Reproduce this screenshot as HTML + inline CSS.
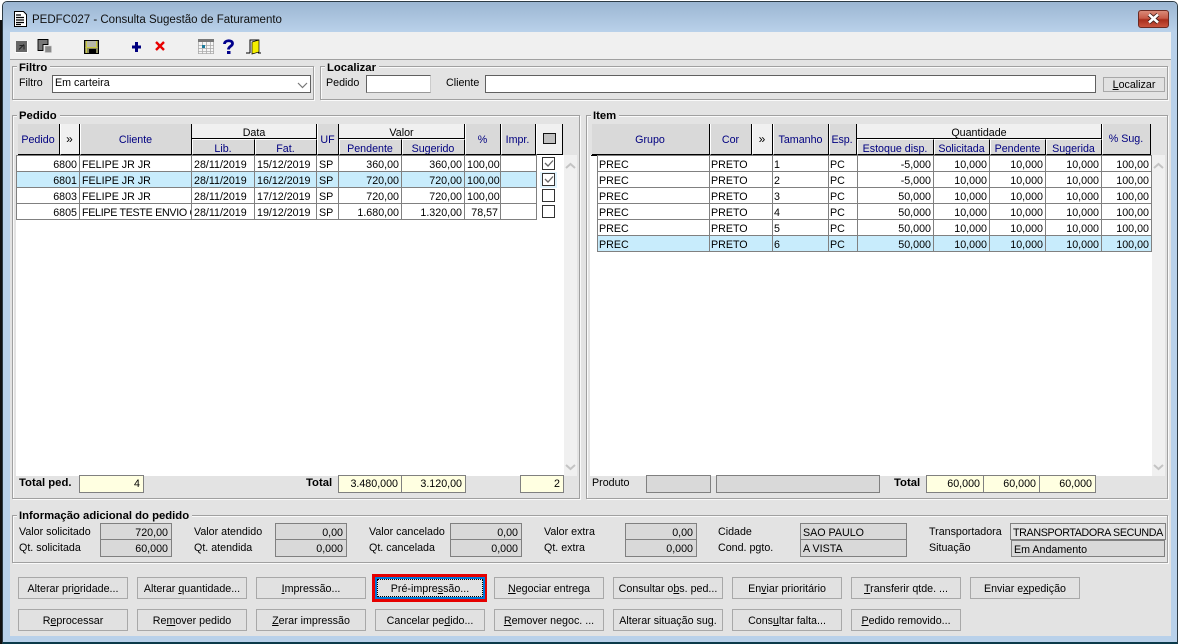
<!DOCTYPE html>
<html><head><meta charset="utf-8"><style>
html,body{margin:0;padding:0;background:#fff;}
body{width:1180px;height:644px;position:relative;overflow:hidden;font:10.7px "Liberation Sans",sans-serif;color:#000;}
div,span.a,svg{position:absolute;box-sizing:border-box;}
.t{white-space:nowrap;line-height:17px;}
.g{border:1px solid #a0a0a0;box-shadow:1px 1px 0 #fafafa,inset 1px 1px 0 #fafafa;}
.lg{position:absolute;background:#e3e3e3;font-weight:bold;font-size:11.3px;line-height:17px;height:15px;padding:0 3px 0 2px;white-space:nowrap;}
.bd{font-weight:bold;font-size:11.3px;}
.h{background:#d9d9d9;color:#000080;text-align:center;border-right:1px solid #000;border-bottom:1px solid #000;border-left:1px solid #fff;padding-right:1px;white-space:nowrap;overflow:hidden;}
.s2{border-top:1px solid #fff;}
.p{background:#f0f0f0;color:#000;text-align:center;border-right:1px solid #000;border-bottom:1px solid #000;white-space:nowrap;overflow:hidden;}
table{position:absolute;border-collapse:collapse;table-layout:fixed;font:10.7px "Liberation Sans",sans-serif;background:#fff;}
td{border:1px solid #808080;height:16px;padding:3px 2px 0;line-height:12px;white-space:nowrap;overflow:hidden;box-sizing:border-box;}
td.r{text-align:right;}
.it td{padding-left:1px;}
.it td.r{padding-right:2px;}
tr.s td{background:#c8ecfc;}
.b{border:1px solid #a8a8a8;background:#e1e1e1;text-align:center;line-height:22px;white-space:nowrap;width:110px;height:22px;overflow:hidden;}
.f{border:1px solid #808080;text-align:right;padding-right:3px;line-height:17px;white-space:nowrap;}
.i{line-height:18px;}
.y{background:#ffffe1;}
.d{background:#d9d9d9;}
.tx{text-align:left;padding-left:2px;padding-right:0;overflow:hidden;}
.c{width:13px;height:13px;border:1px solid #333;background:#fff;left:542px;}
.inp{background:#fff;border:1px solid #606060;}
</style></head><body>
<div style="left:0;top:20px;width:3px;height:624px;background:#111"></div>
<div style="left:2px;top:1px;width:1176px;height:643px;background:#b9d1ea;border:1px solid #2c3a44;border-radius:5px 5px 0 0;border-bottom:2px solid #0b3a4a"></div>
<div style="left:3px;top:2px;width:1174px;height:30px;background:linear-gradient(#9bb6d2,#b9d1ea);border-radius:5px 5px 0 0"></div>
<svg style="left:13px;top:11px" width="15" height="17" viewBox="0 0 15 17"><path d="M1.500.5h9l3 3v12h-12z" fill="#fff" stroke="#000"/><path d="M3 4h5M3 6.500h8M3 9h8M3 11.500h8M3 13.500h5" stroke="#000" stroke-width="1.200"/></svg>
<div class="t" style="left:32px;top:12px;font-size:11.500px;color:#111">PEDFC027 - Consulta Sugestão de Faturamento</div>
<div style="left:1138px;top:10px;width:31px;height:18px;border:1px solid #6b2a22;border-radius:3px;background:linear-gradient(#d98a78 0,#c75b48 45%,#a82e1c 55%,#c9543e 100%)"></div>
<svg style="left:1146px;top:13px" width="15" height="11" viewBox="0 0 15 11"><path d="M3 1.500l9 8M12 1.500l-9 8" stroke="#3a1a16" stroke-width="4.200"/><path d="M3 1.500l9 8M12 1.500l-9 8" stroke="#fff" stroke-width="2.600"/></svg>

<div style="left:10px;top:32px;width:1161px;height:604px;background:#e3e3e3"></div>
<div style="left:10px;top:32px;width:1161px;height:28px;background:#f0f0f0;border-bottom:1px solid #a0a0a0"></div>

<svg style="left:15px;top:39px" width="250" height="16" viewBox="0 0 250 16">
<rect x="1" y="2" width="11" height="11" fill="#666"/><path d="M0 13.500h12.500V2" fill="none" stroke="#fff"/><path d="M9 5.500l-5 5M4.500 6.500h4.500v4" stroke="#222" fill="none"/>
<path d="M23 0.500h10v5h-5v6h-5z" fill="#777" stroke="#000" stroke-width=".9"/><rect x="30" y="7" width="6.500" height="6.500" fill="#8a8a8a" stroke="#ccc" stroke-width=".5"/>
<rect x="69.500" y="1.500" width="14" height="13" fill="#8a8a60" stroke="#000"/><rect x="72" y="2" width="9" height="6" fill="#b8b8a8"/><rect x="74" y="10" width="7" height="4.500" fill="#000"/><path d="M70.500 8.500h12M71.500 2v12M81.500 2v7" stroke="#c8c840" fill="none"/>
<path d="M121.500 3v10M117 8h9" stroke="#000080" stroke-width="3"/>
<path d="M141 3l8 8M149 3l-8 8" stroke="#e80000" stroke-width="2.400"/>
<rect x="183" y="0" width="16" height="15" fill="#f6f6f6"/><rect x="183" y="0" width="16" height="3" fill="#777"/><path d="M183.500 3v12M187.500 3v12M191.500 3v12M195.500 3v12M198.500 3v12M183 6.500h16M183 9.500h16M183 12.500h16M183 14.500h16" stroke="#aaa" stroke-width=".8" fill="none"/><rect x="187" y="6" width="3" height="3" fill="#1a7a9a"/>
<path d="M209.500 5c0-4 8-4.500 8-.5 0 3-4 2.500-4 6" fill="none" stroke="#00008b" stroke-width="2.800"/><rect x="212" y="12" width="3.500" height="3" fill="#00008b"/>
<path d="M231 14h4M235 14V1h8.500v12M243 14h3" fill="none" stroke="#000" stroke-width="1"/><path d="M237 3l7-2v12l-7 2z" fill="#f6f000" stroke="#000" stroke-width=".7"/>
</svg>

<!-- Filtro -->
<div class="g" style="left:12px;top:66px;width:302px;height:34px"></div>
<div class="lg" style="left:17px;top:60px">Filtro</div>
<div class="t" style="left:19px;top:75px">Filtro</div>
<div class="inp" style="left:52px;top:75px;width:259px;height:18px"></div>
<div class="t" style="left:55px;top:75px">Em carteira</div>
<svg style="left:297px;top:81px" width="11" height="8"><path d="M1 2l4.500 4.500L10 2" fill="none" stroke="#777" stroke-width="1.200"/></svg>
<!-- Localizar -->
<div class="g" style="left:320px;top:66px;width:848px;height:34px"></div>
<div class="lg" style="left:325px;top:60px">Localizar</div>
<div class="t" style="left:326px;top:75px">Pedido</div>
<div class="inp" style="left:366px;top:75px;width:65px;height:18px;border-right-color:#ccc;border-bottom-color:#999"></div>
<div class="t" style="left:446px;top:75px">Cliente</div>
<div class="inp" style="left:485px;top:75px;width:611px;height:18px"></div>
<div class="b" style="left:1103px;top:77px;width:62px;height:15px;line-height:15px"><u>L</u>ocalizar</div>

<!-- Pedido -->
<div class="g" style="left:12px;top:115px;width:568px;height:384px"></div>
<div class="lg" style="left:17px;top:108px">Pedido</div>
<div style="left:16px;top:155px;width:561px;height:321px;background:#fff"></div>
<div style="left:564px;top:155px;width:13px;height:321px;background:#f0f0f0"></div>
<svg style="left:565px;top:162px" width="11" height="8"><path d="M1 6l4.500-4L10 6" fill="none" stroke="#c4c4c4" stroke-width="2"/></svg>
<svg style="left:565px;top:463px" width="11" height="8"><path d="M1 2l4.500 4L10 2" fill="none" stroke="#c4c4c4" stroke-width="2"/></svg>

<div class="h" style="left:18px;top:124px;width:42px;height:31px;line-height:33px;border-left:0">Pedido</div>
<div class="h" style="left:60px;top:124px;width:20px;height:31px;line-height:31px;background:#f0f0f0;color:#000;font-size:12px">»</div>
<div class="h" style="left:80px;top:124px;width:112px;height:31px;line-height:33px">Cliente</div>
<div class="p" style="left:192px;top:124px;width:125px;height:15px;line-height:18px">Data</div>
<div class="h s2" style="left:192px;top:139px;width:63px;height:16px;line-height:19px">Lib.</div>
<div class="h s2" style="left:255px;top:139px;width:62px;height:16px;line-height:19px">Fat.</div>
<div class="h" style="left:317px;top:124px;width:22px;height:31px;line-height:33px">UF</div>
<div class="p" style="left:339px;top:124px;width:126px;height:15px;line-height:18px">Valor</div>
<div class="h s2" style="left:339px;top:139px;width:63px;height:16px;line-height:19px">Pendente</div>
<div class="h s2" style="left:402px;top:139px;width:63px;height:16px;line-height:19px">Sugerido</div>
<div class="h" style="left:465px;top:124px;width:36px;height:31px;line-height:33px">%</div>
<div class="h" style="left:501px;top:124px;width:35px;height:31px;line-height:33px;padding-right:2px">Impr.</div>
<div class="h" style="left:536px;top:124px;width:27px;height:31px;background:#f0f0f0"></div>
<div style="left:543px;top:133px;width:13px;height:11px;background:#c0c0c0;border:1px solid #111"></div>

<table style="left:16px;top:155px;width:520px">
<colgroup><col style="width:63px"><col style="width:112px"><col style="width:63px"><col style="width:62px"><col style="width:22px"><col style="width:63px"><col style="width:63px"><col style="width:36px"><col style="width:36px"></colgroup>
<tr><td class="r">6800</td><td>FELIPE JR JR</td><td>28/11/2019</td><td>15/12/2019</td><td>SP</td><td class="r">360,00</td><td class="r">360,00</td><td>100,00</td><td></td></tr>
<tr class="s"><td class="r">6801</td><td>FELIPE JR JR</td><td>28/11/2019</td><td>16/12/2019</td><td>SP</td><td class="r">720,00</td><td class="r">720,00</td><td>100,00</td><td></td></tr>
<tr><td class="r">6803</td><td>FELIPE JR JR</td><td>28/11/2019</td><td>17/12/2019</td><td>SP</td><td class="r">720,00</td><td class="r">720,00</td><td>100,00</td><td></td></tr>
<tr><td class="r">6805</td><td style="letter-spacing:-.3px">FELIPE TESTE ENVIO C</td><td>28/11/2019</td><td>19/12/2019</td><td>SP</td><td class="r">1.680,00</td><td class="r">1.320,00</td><td class="r">78,57</td><td></td></tr>
</table>
<div style="left:540px;top:172px;width:17px;height:16px;background:#dff3fd"></div>
<div class="c" style="top:157px"></div><svg style="left:544px;top:159px" width="10" height="9"><path d="M1 4l3 3 5-5.500" fill="none" stroke="#666" stroke-width="1.300"/></svg>
<div class="c" style="top:173px"></div><svg style="left:544px;top:175px" width="10" height="9"><path d="M1 4l3 3 5-5.500" fill="none" stroke="#666" stroke-width="1.300"/></svg>
<div class="c" style="top:189px"></div>
<div class="c" style="top:205px"></div>

<div class="t bd" style="left:19px;top:475px">Total ped.</div>
<div class="f y" style="left:79px;top:475px;width:65px;height:18px">4</div>
<div class="t bd" style="left:306px;top:475px">Total</div>
<div class="f y" style="left:338px;top:475px;width:64px;height:18px">3.480,000</div>
<div class="f y" style="left:401px;top:475px;width:65px;height:18px">3.120,00</div>
<div class="f y" style="left:520px;top:475px;width:44px;height:18px">2</div>

<!-- Item -->
<div class="g" style="left:586px;top:115px;width:582px;height:384px"></div>
<div class="lg" style="left:591px;top:108px">Item</div>
<div style="left:590px;top:155px;width:575px;height:321px;background:#fff"></div>
<div style="left:1152px;top:155px;width:13px;height:321px;background:#f0f0f0"></div>
<svg style="left:1153px;top:162px" width="11" height="8"><path d="M1 6l4.500-4L10 6" fill="none" stroke="#c4c4c4" stroke-width="2"/></svg>
<svg style="left:1153px;top:463px" width="11" height="8"><path d="M1 2l4.500 4L10 2" fill="none" stroke="#c4c4c4" stroke-width="2"/></svg>
<div style="left:591px;top:155px;width:6px;height:1px;background:#000"></div>

<div class="h" style="left:592px;top:124px;width:118px;height:31px;line-height:33px;border-left:0">Grupo</div>
<div class="h" style="left:710px;top:124px;width:42px;height:31px;line-height:33px">Cor</div>
<div class="h" style="left:752px;top:124px;width:21px;height:31px;line-height:31px;background:#f0f0f0;color:#000;font-size:12px">»</div>
<div class="h" style="left:773px;top:124px;width:56px;height:31px;line-height:33px">Tamanho</div>
<div class="h" style="left:829px;top:124px;width:28px;height:31px;line-height:33px;padding-right:2px;letter-spacing:-.1px">Esp.</div>
<div class="p" style="left:857px;top:124px;width:245px;height:15px;line-height:18px">Quantidade</div>
<div class="h s2" style="left:857px;top:139px;width:77px;height:16px;line-height:19px">Estoque disp.</div>
<div class="h s2" style="left:934px;top:139px;width:56px;height:16px;line-height:19px">Solicitada</div>
<div class="h s2" style="left:990px;top:139px;width:56px;height:16px;line-height:19px">Pendente</div>
<div class="h s2" style="left:1046px;top:139px;width:56px;height:16px;line-height:19px">Sugerida</div>
<div class="h" style="left:1102px;top:124px;width:49px;height:31px;line-height:31px">% Sug.</div>

<table class="it" style="left:597px;top:155px;width:554px">
<colgroup><col style="width:112px"><col style="width:63px"><col style="width:56px"><col style="width:29px"><col style="width:76px"><col style="width:56px"><col style="width:56px"><col style="width:56px"><col style="width:50px"></colgroup>
<tr><td>PREC</td><td>PRETO</td><td>1</td><td>PC</td><td class="r">-5,000</td><td class="r">10,000</td><td class="r">10,000</td><td class="r">10,000</td><td class="r">100,00</td></tr>
<tr><td>PREC</td><td>PRETO</td><td>2</td><td>PC</td><td class="r">-5,000</td><td class="r">10,000</td><td class="r">10,000</td><td class="r">10,000</td><td class="r">100,00</td></tr>
<tr><td>PREC</td><td>PRETO</td><td>3</td><td>PC</td><td class="r">50,000</td><td class="r">10,000</td><td class="r">10,000</td><td class="r">10,000</td><td class="r">100,00</td></tr>
<tr><td>PREC</td><td>PRETO</td><td>4</td><td>PC</td><td class="r">50,000</td><td class="r">10,000</td><td class="r">10,000</td><td class="r">10,000</td><td class="r">100,00</td></tr>
<tr><td>PREC</td><td>PRETO</td><td>5</td><td>PC</td><td class="r">50,000</td><td class="r">10,000</td><td class="r">10,000</td><td class="r">10,000</td><td class="r">100,00</td></tr>
<tr class="s"><td>PREC</td><td>PRETO</td><td>6</td><td>PC</td><td class="r">50,000</td><td class="r">10,000</td><td class="r">10,000</td><td class="r">10,000</td><td class="r">100,00</td></tr>
</table>

<div class="t" style="left:592px;top:475px">Produto</div>
<div class="f d" style="left:646px;top:475px;width:65px;height:18px"></div>
<div class="f d" style="left:716px;top:475px;width:164px;height:18px"></div>
<div class="t bd" style="left:894px;top:475px">Total</div>
<div class="f y" style="left:926px;top:475px;width:58px;height:18px">60,000</div>
<div class="f y" style="left:983px;top:475px;width:57px;height:18px">60,000</div>
<div class="f y" style="left:1039px;top:475px;width:57px;height:18px">60,000</div>

<!-- Info -->
<div class="g" style="left:12px;top:515px;width:1156px;height:48px"></div>
<div class="lg" style="left:17px;top:508px">Informação adicional do pedido</div>
<div class="t" style="left:19px;top:524px">Valor solicitado</div>
<div class="t" style="left:19px;top:540px">Qt. solicitada</div>
<div class="f d i" style="left:100px;top:523px;width:72px;height:17px">720,00</div>
<div class="f d i" style="left:100px;top:539px;width:72px;height:18px">60,000</div>
<div class="t" style="left:194px;top:524px">Valor atendido</div>
<div class="t" style="left:194px;top:540px">Qt. atendida</div>
<div class="f d i" style="left:275px;top:523px;width:72px;height:17px">0,00</div>
<div class="f d i" style="left:275px;top:539px;width:72px;height:18px">0,000</div>
<div class="t" style="left:369px;top:524px">Valor cancelado</div>
<div class="t" style="left:369px;top:540px">Qt. cancelada</div>
<div class="f d i" style="left:450px;top:523px;width:72px;height:17px">0,00</div>
<div class="f d i" style="left:450px;top:539px;width:72px;height:18px">0,000</div>
<div class="t" style="left:544px;top:524px">Valor extra</div>
<div class="t" style="left:544px;top:540px">Qt. extra</div>
<div class="f d i" style="left:625px;top:523px;width:72px;height:17px">0,00</div>
<div class="f d i" style="left:625px;top:539px;width:72px;height:18px">0,000</div>
<div class="t" style="left:718px;top:524px">Cidade</div>
<div class="t" style="left:718px;top:540px">Cond. pgto.</div>
<div class="f d tx i" style="left:800px;top:523px;width:107px;height:17px">SAO PAULO</div>
<div class="f d tx i" style="left:800px;top:539px;width:107px;height:18px">A VISTA</div>
<div class="t" style="left:929px;top:524px">Transportadora</div>
<div class="t" style="left:929px;top:540px">Situação</div>
<div class="f tx i" style="left:1010px;top:523px;width:156px;height:17px;background:#e3e3e3;letter-spacing:-.35px">TRANSPORTADORA SECUNDA</div>
<div class="f d tx i" style="left:1011px;top:540px;width:154px;height:17px">Em Andamento</div>

<!-- Buttons -->
<div class="b" style="left:18px;top:577px">Alterar pri<u>o</u>ridade...</div>
<div class="b" style="left:137px;top:577px">Alterar <u>q</u>uantidade...</div>
<div class="b" style="left:256px;top:577px"><u>I</u>mpressão...</div>
<div style="left:372px;top:574px;width:115px;height:28px;background:#e60000"></div>
<div class="b" style="left:375px;top:577px;border:2px solid #0078d7;line-height:20px;outline:1px dotted #000;outline-offset:-3px">Pré-impre<u>s</u>são...</div>
<div class="b" style="left:494px;top:577px"><u>N</u>egociar entrega</div>
<div class="b" style="left:613px;top:577px">Consultar o<u>b</u>s. ped...</div>
<div class="b" style="left:732px;top:577px">En<u>v</u>iar prioritário</div>
<div class="b" style="left:851px;top:577px"><u>T</u>ransferir qtde. ...</div>
<div class="b" style="left:970px;top:577px">Enviar e<u>x</u>pedição</div>
<div class="b" style="left:18px;top:609px">R<u>e</u>processar</div>
<div class="b" style="left:137px;top:609px">Re<u>m</u>over pedido</div>
<div class="b" style="left:256px;top:609px"><u>Z</u>erar impressão</div>
<div class="b" style="left:375px;top:609px">Cancelar pe<u>d</u>ido...</div>
<div class="b" style="left:494px;top:609px"><u>R</u>emover negoc. ...</div>
<div class="b" style="left:613px;top:609px">Alterar situação su<u>g</u>.</div>
<div class="b" style="left:732px;top:609px">Cons<u>u</u>ltar falta...</div>
<div class="b" style="left:851px;top:609px"><u>P</u>edido removido...</div>
</body></html>
